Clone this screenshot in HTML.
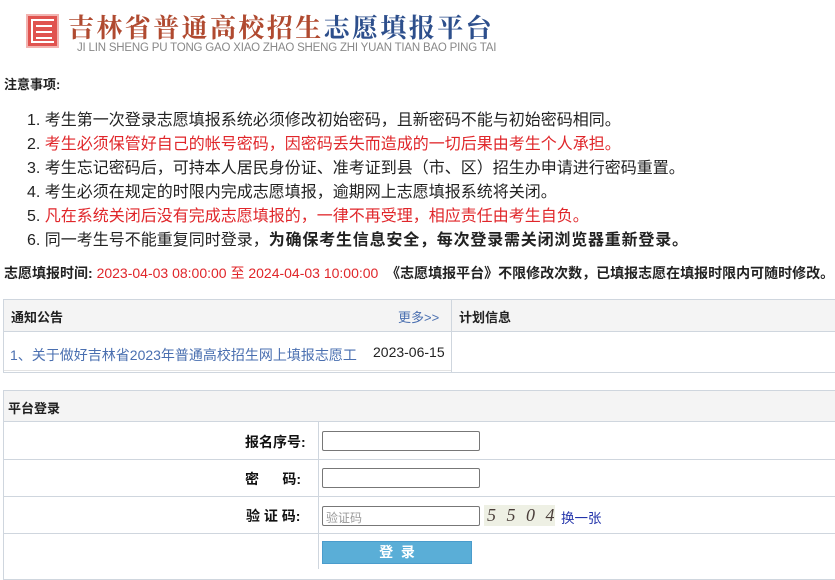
<!DOCTYPE html>
<html><head><meta charset="utf-8"><style>
*{margin:0;padding:0;box-sizing:border-box}
body{width:835px;height:569px;overflow:hidden;background:#fff;font-family:"Liberation Sans","Noto Sans CJK SC",sans-serif;position:relative;color:#222}
.a{position:absolute;white-space:nowrap}
.red{color:#e0262a}
.li{font-size:16px;left:27px}
.box{position:absolute;border:1px solid #cfd6de}
.hd{background:#f4f4f4;border-bottom:1px solid #cfd6de}
.lab{font-size:14px;font-weight:bold;color:#111}
.inp{position:absolute;left:322px;width:158px;height:20px;border:1px solid #777;border-radius:2px;background:#fff}
.hl{position:absolute;left:3px;width:832px;height:1px;background:#cfd6de}
</style></head><body>
<div class="a" style="left:26px;top:14px;width:33px;height:34px;background:#e0534f;border:2px solid #f2b3b0"></div>
<div class="a" style="left:31px;top:19px;width:23px;height:24px;border:2px solid #fff;border-right:none"></div>
<div class="a" style="left:36px;top:25px;width:16px;height:2px;background:#fff"></div>
<div class="a" style="left:36px;top:31px;width:16px;height:2px;background:#fff"></div>
<div class="a" style="left:36px;top:37px;width:16px;height:2px;background:#fff"></div>
<div class="a" style="left:68px;top:8px;font-size:26px;font-family:'Noto Serif CJK SC',serif;font-weight:bold;color:#b04a30;letter-spacing:2.4px">吉林省普通高校招生<span style="color:#2d4f8c">志愿填报平台</span></div>
<div class="a" style="left:77px;top:42px;font-size:11.5px;color:#888;letter-spacing:-.2px">JI LIN SHENG PU TONG GAO XIAO ZHAO SHENG ZHI YUAN TIAN BAO PING TAI</div>

<div class="a" style="left:4px;top:74px;font-size:13px;font-weight:bold">注意事项:</div>
<div class="a li" style="top:106px">1. 考生第一次登录志愿填报系统必须修改初始密码，且新密码不能与初始密码相同。</div>
<div class="a li" style="top:130px">2. <span class="red">考生必须保管好自己的帐号密码，因密码丢失而造成的一切后果由考生个人承担。</span></div>
<div class="a li" style="top:154px">3. 考生忘记密码后，可持本人居民身份证、准考证到县（市、区）招生办申请进行密码重置。</div>
<div class="a li" style="top:178px">4. 考生必须在规定的时限内完成志愿填报，逾期网上志愿填报系统将关闭。</div>
<div class="a li" style="top:202px">5. <span class="red">凡在系统关闭后没有完成志愿填报的，一律不再受理，相应责任由考生自负。</span></div>
<div class="a li" style="top:226px">6. 同一考生号不能重复同时登录，<b style="letter-spacing:.8px">为确保考生信息安全，每次登录需关闭浏览器重新登录。</b></div>
<div class="a" style="left:4px;top:263px;font-size:14px"><b>志愿填报时间:</b> <span class="red">2023-04-03 08:00:00 至 2024-04-03 10:00:00</span> &nbsp;<b>《志愿填报平台》不限修改次数，已填报志愿在填报时限内可随时修改。</b></div>

<div class="box" style="left:3px;top:299px;width:840px;height:74px"></div>
<div class="a hd" style="left:4px;top:300px;width:831px;height:32px"></div>
<div class="a" style="left:451px;top:300px;width:1px;height:72px;background:#cfd6de"></div>
<div class="a" style="left:11px;top:307px;font-size:13px;font-weight:bold">通知公告</div>
<div class="a" style="left:398px;top:307px;font-size:13px;color:#4a6fb0">更多&gt;&gt;</div>
<div class="a" style="left:459px;top:307px;font-size:13px;font-weight:bold">计划信息</div>
<div class="a" style="left:10px;top:345px;font-size:14px;color:#4a6fb0">1、关于做好吉林省2023年普通高校招生网上填报志愿工</div>
<div class="a" style="left:373px;top:344px;font-size:14px">2023-06-15</div>
<div class="a" style="left:4px;top:370px;width:447px;height:1px;background:#e3e3e3"></div>

<div class="box" style="left:3px;top:390px;width:840px;height:190px"></div>
<div class="a hd" style="left:4px;top:391px;width:831px;height:31px"></div>
<div class="a" style="left:8px;top:398px;font-size:13px;font-weight:bold">平台登录</div>
<div class="hl" style="top:459px"></div><div class="hl" style="top:496px"></div><div class="hl" style="top:533px"></div>
<div class="a" style="left:318px;top:422px;width:1px;height:147px;background:#cfd6de"></div>
<div class="a lab" style="left:245px;top:432px">报名序号:</div>
<div class="a lab" style="left:245px;top:469px">密&nbsp;&nbsp;&nbsp;&nbsp;&nbsp;&nbsp;码:</div>
<div class="a lab" style="left:246px;top:506px">验 证 码:</div>
<div class="inp" style="top:431px"></div>
<div class="inp" style="top:468px"></div>
<div class="inp" style="top:506px;font-size:12px;color:#999;padding:2px 0 0 3px">验证码</div>
<div class="a" style="left:484px;top:505px;width:71px;height:21px;background:#eef0e4;font-family:'Liberation Serif',serif;font-style:italic;font-size:18px;color:#4a3e3a;letter-spacing:3px;padding-left:3px">5 5 0 4</div>
<div class="a" style="left:561px;top:507px;font-size:13.5px;color:#2233aa">换一张</div>
<div class="a" style="left:322px;top:541px;width:150px;height:23px;background:#5aaed7;border:1px solid #4a9ccc;color:#fff;font-size:14px;font-weight:bold;text-align:center;line-height:21px">登&nbsp;&nbsp;录</div>
</body></html>
